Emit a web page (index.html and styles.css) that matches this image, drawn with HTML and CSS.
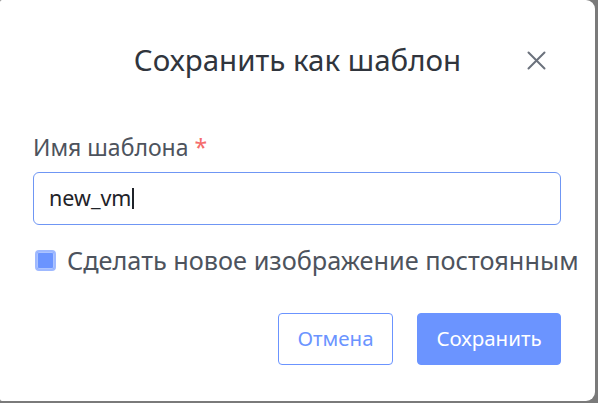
FILE: index.html
```html
<!DOCTYPE html>
<html lang="ru">
<head>
<meta charset="utf-8">
<link rel="stylesheet" href="styles.css">
</head>
<body>
<div class="dialog">
  <div class="header">
    <h1 class="title">Сохранить как шаблон</h1>
    <button class="close" aria-label="Закрыть">
      <svg width="19" height="19" viewBox="0 0 19 19"><path d="M1.5 1.5L17.5 17.5M17.5 1.5L1.5 17.5" stroke="#6b717c" stroke-width="2" fill="none" stroke-linecap="round"/></svg>
    </button>
  </div>
  <div class="body">
    <label class="label">Имя шаблона <span class="req">*</span></label>
    <div class="input"><span class="value">new_vm</span><span class="caret"></span></div>
    <div class="check-row">
      <span class="checkbox"></span>
      <span class="check-label">Сделать новое изображение постоянным</span>
    </div>
  </div>
  <div class="footer">
    <button class="btn btn-outline">Отмена</button>
    <button class="btn btn-primary">Сохранить</button>
  </div>
</div>
</body>
</html>
```

FILE: styles.css
```css
* { box-sizing: border-box; }
html, body { margin: 0; padding: 0; }
body {
  width: 598px;
  height: 403px;
  background: #7a7a7a;
  overflow: hidden;
  font-family: "Noto Sans", "Open Sans", sans-serif;
}
.dialog {
  width: 595px;
  height: 401px;
  background: #fff;
  border-radius: 2px 9px 9px 2px;
  display: flex;
  flex-direction: column;
}
.header {
  position: relative;
  padding: 42px 0 54px;
  display: flex;
  justify-content: center;
}
.title {
  margin: 0;
  font-size: 29.5px;
  line-height: 36px;
  font-weight: 400;
  color: #30353d;
}
.close {
  position: absolute;
  left: 527px;
  top: 51px;
  border: 0;
  background: none;
  padding: 0;
  width: 19px;
  height: 19px;
  display: flex;
}
.body {
  padding: 0 34px 0 33px;
  display: flex;
  flex-direction: column;
}
.label {
  font-size: 23px;
  line-height: 30px;
  color: #4d535d;
}
.req { color: #f56c6c; }
.input {
  margin-top: 10px;
  height: 53px;
  border: 1px solid #6f96f4;
  border-radius: 6px;
  display: flex;
  align-items: center;
  padding: 0 0 3px 15px;
  font-size: 21.5px;
  color: #1f2329;
}
.caret {
  width: 1.5px;
  height: 21px;
  background: #1f2329;
  margin: 3px 0 0 1px;
}
.check-row {
  display: flex;
  align-items: center;
  margin-top: 18px;
  gap: 11px;
}
.checkbox {
  flex: none;
  width: 21px;
  height: 21px;
  margin-left: 2px;
  border-radius: 4px;
  background: #6b94ff;
  border: 2px solid #9fb9ff;
  box-shadow: inset 0 0 0 1px rgba(255, 255, 255, 0.45);
}
.check-label {
  font-size: 25.3px;
  color: #4d535d;
  white-space: nowrap;
}
.footer {
  display: flex;
  justify-content: flex-end;
  gap: 24px;
  padding: 36px 34px 0 0;
}
.btn {
  font-family: inherit;
  font-size: 20.5px;
  height: 52px;
  border-radius: 4px;
  padding: 0 0 3px;
  cursor: pointer;
}
.btn-outline {
  width: 115px;
  background: #fff;
  border: 1px solid #6b94ff;
  color: #6b94ff;
}
.btn-primary {
  width: 144px;
  background: #6b94ff;
  border: 1px solid #6b94ff;
  color: #fff;
}
```
